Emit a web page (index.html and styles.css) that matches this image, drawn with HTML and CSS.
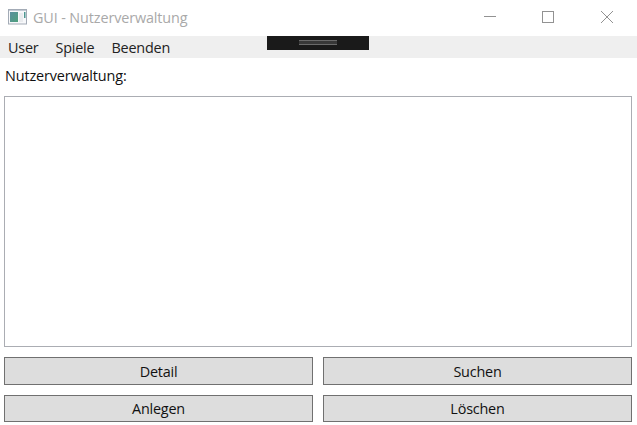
FILE: index.html
```html
<!DOCTYPE html>
<html lang="de">
<head>
<meta charset="utf-8">
<title>GUI - Nutzerverwaltung</title>
<link rel="stylesheet" href="styles.css">
</head>
<body>
<div class="window">
  <header class="titlebar">
    <svg class="app-icon" width="19" height="16" viewBox="0 0 19 16">
      <defs><linearGradient id="pane" x1="0" y1="0" x2="1" y2="1"><stop offset="0" stop-color="#5a8f9f"/><stop offset="1" stop-color="#4fa07c"/></linearGradient></defs>
      <rect x=".5" y=".5" width="18" height="14.5" fill="#f7f8fa" stroke="#a3abb6"/>
      <path d="M1 1.5h17" stroke="#c3cad4"/>
      <rect x="2" y="3" width="8" height="10" fill="url(#pane)"/>
      <path d="M11 4h4v9h-4z" fill="#e9ebee"/>
      <rect x="16" y="3" width="1.5" height="6" fill="#4e9791"/>
    </svg>
    <span class="title">GUI - Nutzerverwaltung</span>
    <div class="controls">
      <svg width="12" height="12" viewBox="0 0 12 12"><path d="M0 5.5h12"/></svg>
      <svg width="12" height="12" viewBox="0 0 12 12"><rect x=".5" y=".5" width="11" height="11"/></svg>
      <svg class="close" width="12" height="12" viewBox="0 0 12 12"><path d="M0 0l12 12M12 0L0 12"/></svg>
    </div>
  </header>
  <nav class="menu">
    <span class="user">User</span><span class="games">Spiele</span><span class="quit">Beenden</span>
    <div class="debug-bar"><i class="grip"></i></div>
  </nav>
  <main class="content">
    <div class="label"><span>Nutzerverwaltung:</span></div>
    <div class="list"></div>
    <div class="buttons">
      <button>Detail</button><button>Suchen</button>
      <button>Anlegen</button><button>Löschen</button>
    </div>
  </main>
</div>
</body>
</html>
```
FILE: styles.css
```css
* { box-sizing: border-box; }
body { margin: 0; background: #fff; font: 14.4px/20px "Open Sans", "Noto Sans", sans-serif; color: #111; overflow: hidden; }
.window { width: 637px; height: 425px; display: flex; flex-direction: column; }
.titlebar { height: 36px; display: flex; align-items: center; padding: 0 24px 0 8px; }
.app-icon { margin-top: -2px; }
.title { margin-left: 6px; color: #a9a9a9; letter-spacing: -.12px; }
.controls { margin-left: auto; margin-top: -2px; display: flex; gap: 46px; }
.controls svg { display: block; fill: none; stroke: #929292; stroke-width: 1; }
.controls .close { margin-left: 1px; }
.menu { height: 22px; background: #efefef; display: flex; align-items: center; padding: 2px 0 0 8px; gap: 17px; position: relative; color: #222; letter-spacing: -.2px; }
.debug-bar { position: absolute; left: 267px; top: 0; width: 102px; height: 14px; background: #1a1a1a; display: flex; justify-content: center; padding-top: 4px; }
.grip { width: 38px; height: 5px; border-top: 1px solid #6a6a6a; border-bottom: 1px solid #6a6a6a; background: #383838; }
.content { flex: 1; padding: 0 5px 3px 4px; }
.label { height: 38px; padding: 8px 0 0 1px; letter-spacing: -.13px; }
.list { height: 251px; border: 1px solid #abadb3; }
.buttons { margin-top: 10px; display: grid; grid-template-columns: 309px 309px; grid-template-rows: 28px 27px; gap: 10px; }
button { margin: 0; padding: 1px 0 0; font: inherit; color: #111; letter-spacing: -.2px; background: #ddd; border: 1px solid #707070; }
```
